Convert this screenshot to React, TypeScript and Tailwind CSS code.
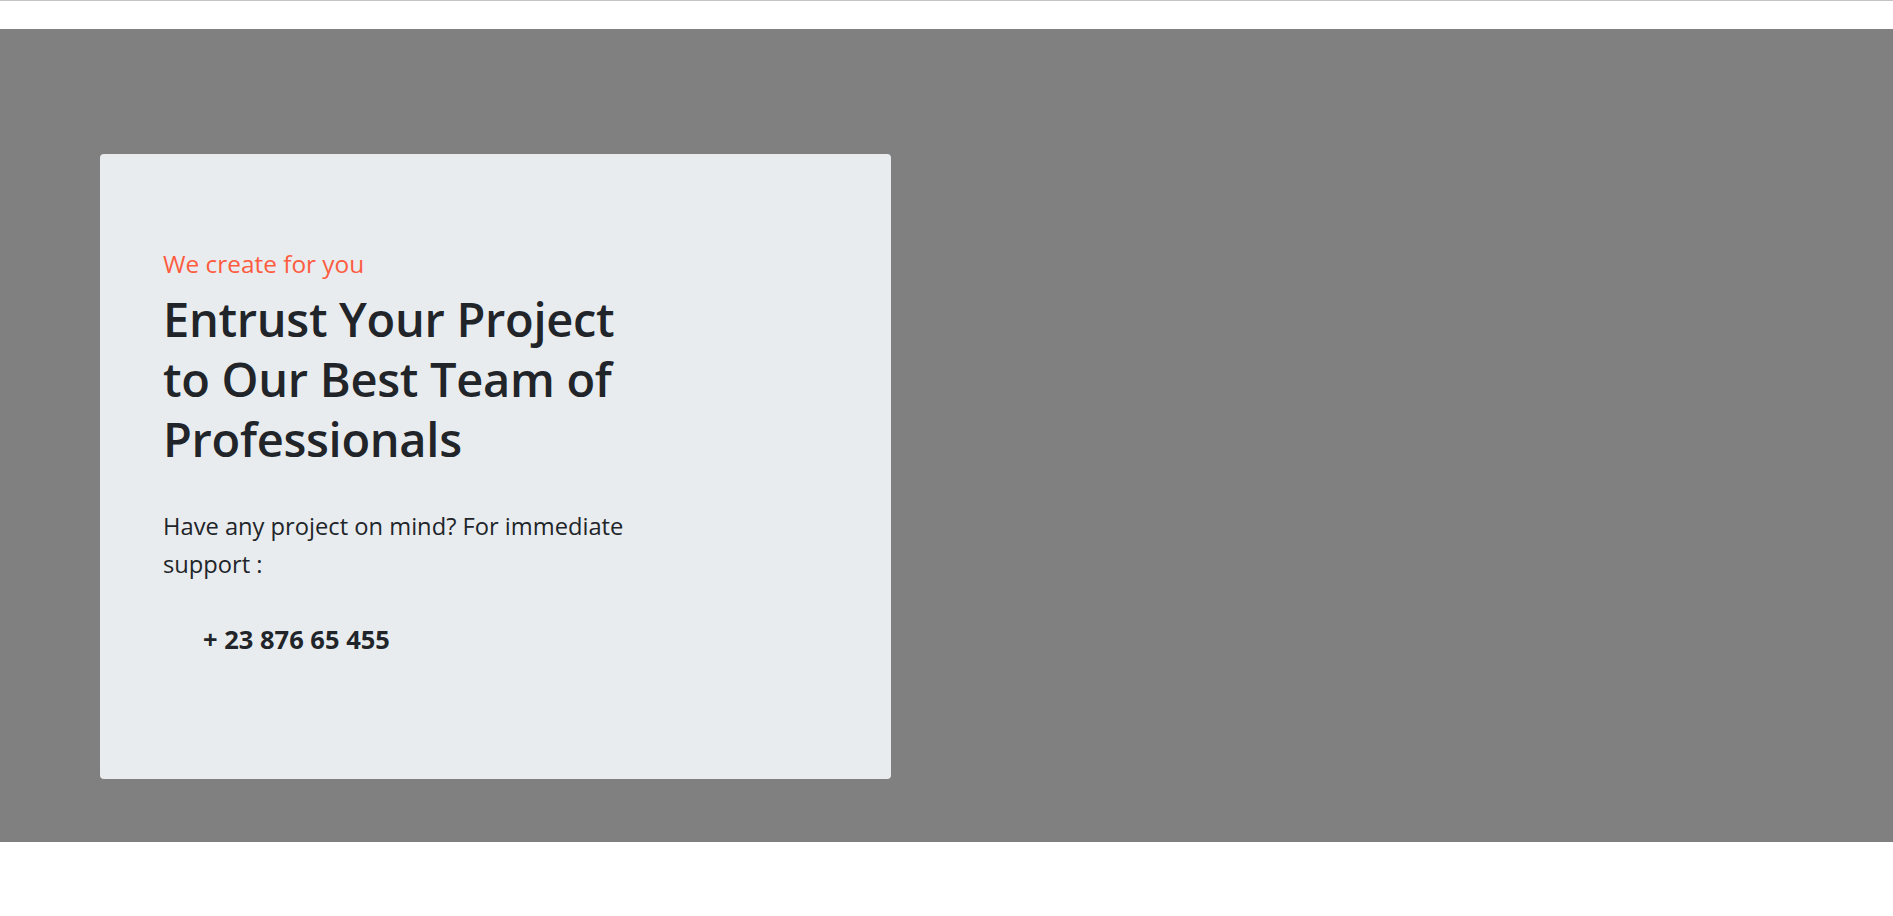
import React from 'react';

const font = { fontFamily: '"Open Sans", "Noto Sans", sans-serif' };

export default function App() {
    return (
        <div className="min-h-screen bg-white text-[#212529]" style={font}>
            {/* Top rule */}
            <div className="h-px bg-[#c4c4c4]" />

            {/* Hero */}
            <div className="pt-[28px]">
                <section className="h-[813px] bg-[#808080] pt-[125px] pl-[100px]">
                    <div className="w-[791px] h-[625px] rounded bg-[#e9ecef] pt-[95px] pl-[63px]">
                        <div className="max-w-[475px]">
                            <h5 className="text-[24.4px] leading-[30px] text-[#fd5c40]">We create for you</h5>
                            <h1 className="mt-[10px] text-[47px] leading-[60px] font-semibold tracking-[-0.3px]">
                                Entrust Your Project to Our Best Team of Professionals
                            </h1>
                            <p className="mt-[39px] text-[23.7px] leading-[37.5px]">
                                Have any project on mind? For immediate support :
                            </p>
                            <div className="mt-[39px] ml-[40px] text-[25.5px] leading-[34px] font-bold">
                                + 23 876 65 455
                            </div>
                        </div>
                    </div>
                </section>
            </div>
        </div>
    );
}
